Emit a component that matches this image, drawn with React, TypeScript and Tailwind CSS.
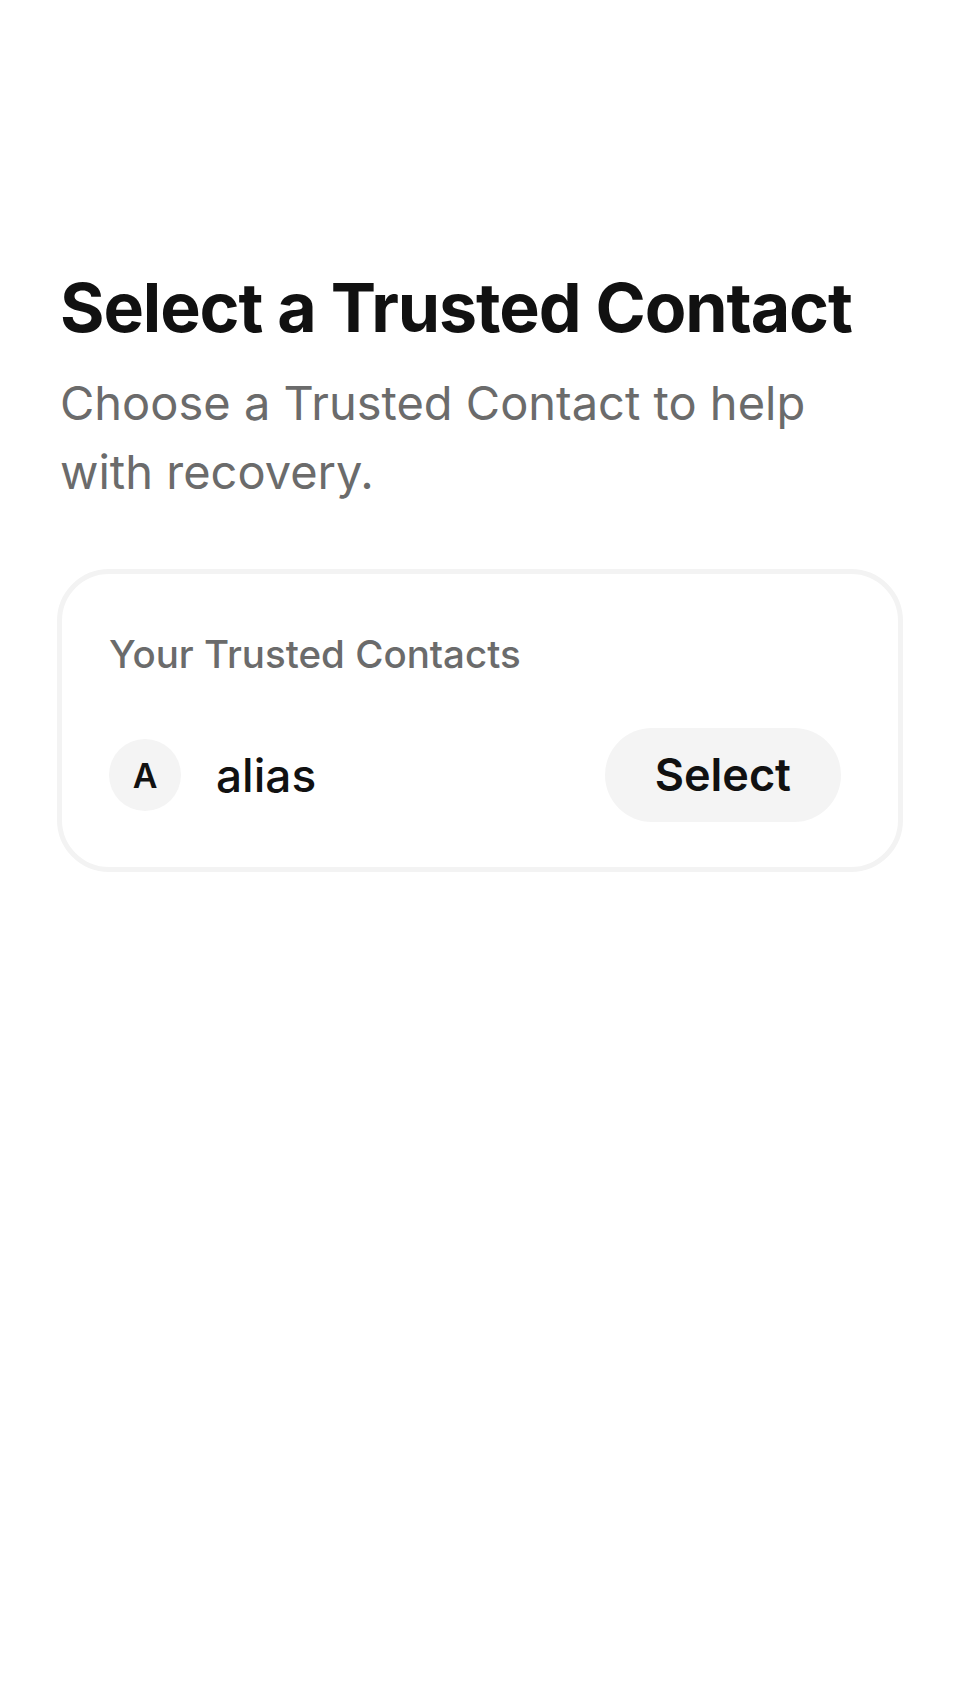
import React from "react";

const contacts = [{ id: 1, alias: "alias" }];

export default function App() {
  return (
    <div
      className="min-h-[1704px] w-full bg-white px-[57px] pt-[266px] text-[#111111]"
      style={{ fontFamily: "Inter, 'Noto Sans', sans-serif" }}
    >
      <h1 className="pl-[3px] text-[68px] font-bold leading-[82px] tracking-[-0.016em]">
        Select a Trusted Contact
      </h1>

      <p className="mt-[20px] pl-[3px] pr-[30px] text-[47px] leading-[69px] text-[#6b6b6b]">
        Choose a Trusted Contact to help with recovery.
      </p>

      <div className="mt-[63px] rounded-[52px] border-[5px] border-[#f3f3f3] pt-[52px] pb-[45px] pl-[47px] pr-[57px]">
        <h2 className="text-[38.5px] font-medium leading-[57px] text-[#6b6b6b]">
          Your Trusted Contacts
        </h2>

        <div className="mt-[45px] flex flex-col">
          {contacts.map((c) => (
            <div key={c.id} className="flex items-center justify-between">
              <div className="flex items-center gap-[35px]">
                <div className="flex h-[72px] w-[72px] items-center justify-center rounded-full bg-[#f4f4f4] text-[34px] font-semibold">
                  {c.alias.charAt(0).toUpperCase()}
                </div>
                <span className="text-[46px] font-medium">{c.alias}</span>
              </div>
              <button className="flex h-[94px] items-center rounded-full bg-[#f4f4f4] px-[50px] text-[45px] font-semibold">
                Select
              </button>
            </div>
          ))}
        </div>
      </div>
    </div>
  );
}
